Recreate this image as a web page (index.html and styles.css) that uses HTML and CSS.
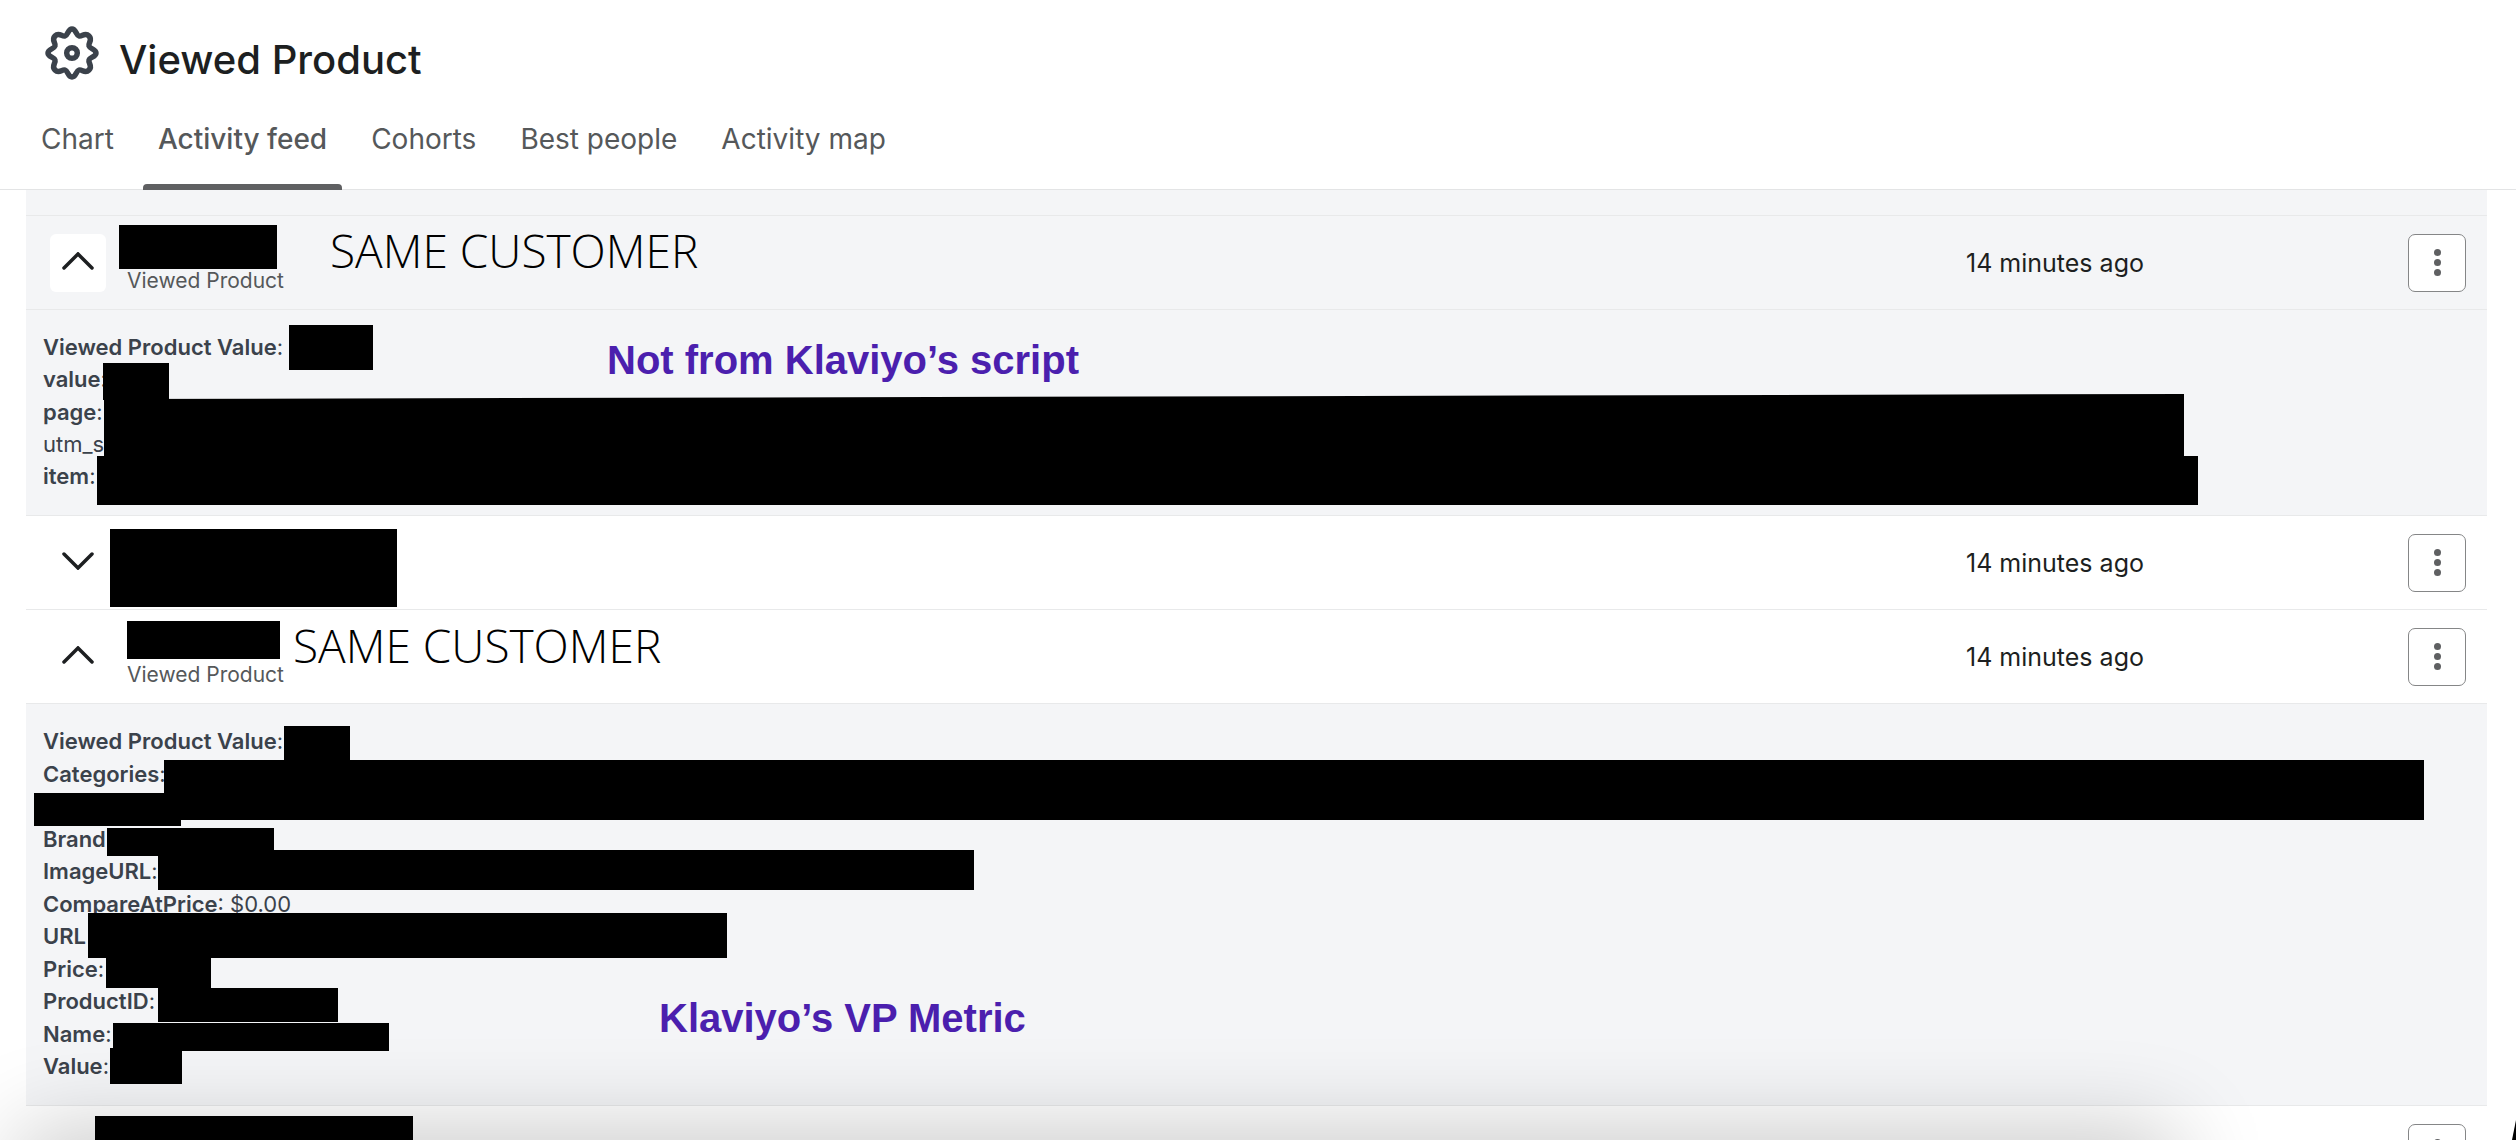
FILE: index.html
```html
<!DOCTYPE html>
<html lang="en">
<head>
  <meta charset="UTF-8" />
  <meta name="viewport" content="width=device-width, initial-scale=1.0"/>
  <title>Viewed Product</title>
  <link rel="stylesheet" href="styles.css">
</head>
<body>
  <header class="header">
    <div class="heading">
      <svg class="gear" viewBox="0 0 54 54" fill="none" stroke="#3b424b" stroke-width="5.5" stroke-linejoin="round" aria-hidden="true">
        <path d="M27 3C31 3 31 9 34 10C37 11 40 6 44 10C48 14 43 17 44 20C45 23 51 23 51 27C51 31 45 31 44 34C43 37 48 40 44 44C40 48 37 43 34 44C31 45 31 51 27 51C23 51 23 45 20 44C17 43 14 48 10 44C6 40 11 37 10 34C9 31 3 31 3 27C3 23 9 23 10 20C11 17 6 14 10 10C14 6 17 11 20 10C23 9 23 3 27 3Z"/>
        <circle cx="27" cy="27" r="5.3"/>
      </svg>
      <h1 class="title">Viewed Product</h1>
    </div>
    <nav class="tabs">
      <a class="tab" href="#">Chart</a>
      <a class="tab active" href="#">Activity feed</a>
      <a class="tab" href="#">Cohorts</a>
      <a class="tab" href="#">Best people</a>
      <a class="tab" href="#">Activity map</a>
    </nav>
  </header>

  <main class="feed">
    <div class="strip"></div>

    <section class="row shaded">
      <button class="toggle hovered" aria-label="Collapse">
        <svg class="chevron" viewBox="0 0 32 18"><path d="M2 16L16 2L30 16"/></svg>
      </button>
      <div class="person">Viewed Product</div>
      <div class="time">14 minutes ago</div>
      <button class="menu" aria-label="More"><span></span><span></span><span></span></button>
      <div class="mask m-name1"></div>
      <div class="note customer note1">SAME CUSTOMER</div>
    </section>
    <section class="details short">
      <p><b>Viewed Product Value</b>:</p>
      <p><b>value</b>:</p>
      <p><b>page</b>:</p>
      <p>utm_s</p>
      <p><b>item</b>:</p>
      <div class="mask m-total1"></div>
      <div class="mask m-value1"></div>
      <div class="mask m-page"></div>
      <div class="mask m-item"></div>
      <div class="note source note2">Not from Klaviyo’s script</div>
    </section>

    <section class="row">
      <button class="toggle" aria-label="Expand">
        <svg class="chevron" viewBox="0 0 32 18"><path d="M2 2L16 16L30 2"/></svg>
      </button>
      <div class="person"></div>
      <div class="time">14 minutes ago</div>
      <button class="menu" aria-label="More"><span></span><span></span><span></span></button>
      <div class="mask m-name2"></div>
    </section>

    <section class="row">
      <button class="toggle" aria-label="Collapse">
        <svg class="chevron" viewBox="0 0 32 18"><path d="M2 16L16 2L30 16"/></svg>
      </button>
      <div class="person">Viewed Product</div>
      <div class="time">14 minutes ago</div>
      <button class="menu" aria-label="More"><span></span><span></span><span></span></button>
      <div class="mask m-name3"></div>
      <div class="note customer note3">SAME CUSTOMER</div>
    </section>
    <section class="details long">
      <p><b>Viewed Product Value</b>:</p>
      <p><b>Categories</b>:</p>
      <p>&nbsp;</p>
      <p><b>Brand</b></p>
      <p><b>ImageURL</b>:</p>
      <p><b>CompareAtPrice</b>: $0.00</p>
      <p><b>URL</b></p>
      <p><b>Price</b>:</p>
      <p><b>ProductID</b>:</p>
      <p><b>Name</b>:</p>
      <p><b>Value</b>:</p>
      <div class="mask m-total2"></div>
      <div class="mask m-categories"></div>
      <div class="mask m-categories-end"></div>
      <div class="mask m-brand"></div>
      <div class="mask m-image"></div>
      <div class="mask m-url"></div>
      <div class="mask m-price"></div>
      <div class="mask m-product"></div>
      <div class="mask m-label"></div>
      <div class="mask m-value2"></div>
      <div class="note source note4">Klaviyo’s VP Metric</div>
    </section>

    <section class="row">
      <div class="person"></div>
      <button class="menu" aria-label="More"><span></span><span></span><span></span></button>
      <div class="mask m-name4"></div>
    </section>
  </main>
  <div class="dock-shadow"></div>
  <div class="corner"></div>
</body>
</html>
```
FILE: styles.css
```css
* {
  box-sizing: border-box;
}

body {
  display: flex;
  flex-direction: column;
  margin: 0;
  height: 100vh;
  overflow: hidden;
  background: #fff;
  color: #1d1f21;
  font-family: Inter, sans-serif;
}

.header {
  border-bottom: 1px solid #e3e4e5;
}

.heading {
  display: flex;
  align-items: flex-start;
  gap: 20px;
  padding: 26px 45px 0;
}

.gear {
  width: 54px;
  height: 54px;
}

.title {
  margin: 9px 0 0;
  font-size: 40px;
  line-height: 50px;
  font-weight: 500;
}

.tabs {
  display: flex;
  gap: 14px;
  padding: 28px 26px 0;
}

.tab {
  position: relative;
  padding: 9px 15px 34px;
  margin-bottom: -1px;
  color: #55585a;
  font-size: 28px;
  line-height: 34px;
  text-decoration: none;
}

.tab.active {
  font-weight: 500;
}

.tab.active::after {
  content: "";
  position: absolute;
  left: 0;
  right: 0;
  bottom: 0;
  height: 6px;
  background: #5f6062;
  border-radius: 4px 4px 0 0;
}

.feed {
  flex: 1;
  min-height: 0;
  margin: 0 29px 0 26px;
  overflow: hidden;
}

.strip {
  height: 26px;
  background: #f4f5f7;
  border-bottom: 1px solid #e8e9ea;
}

.row {
  position: relative;
  display: flex;
  align-items: center;
  height: 94px;
  padding: 0 21px 0 24px;
  border-bottom: 1px solid #e8e9ea;
}

.shaded {
  background: #f4f5f7;
}

.toggle {
  width: 56px;
  height: 58px;
  padding: 0;
  border: none;
  border-radius: 6px;
  background: transparent;
}

.hovered {
  background: #fff;
}

.chevron {
  width: 32px;
  height: 18px;
  fill: none;
  stroke: #1d1f21;
  stroke-width: 3.5;
  stroke-linecap: round;
}

.person {
  flex: 1;
  padding: 36px 0 0 21px;
  color: #55585a;
  font-size: 21px;
  line-height: 28px;
}

.time {
  width: 442px;
  font-size: 25px;
  line-height: 32px;
}

.menu {
  display: flex;
  flex-direction: column;
  align-items: center;
  justify-content: center;
  gap: 3px;
  width: 58px;
  height: 58px;
  padding: 0;
  border: 1px solid #858687;
  border-radius: 7px;
  background: #fff;
}

.menu span {
  width: 7px;
  height: 7px;
  border-radius: 50%;
  background: #5f6062;
}

.details {
  position: relative;
  display: flex;
  flex-direction: column;
  justify-content: space-between;
  padding: 21px 17px 23px;
  background: #f4f5f7;
  border-bottom: 1px solid #e8e9ea;
  color: #3b424b;
  font-size: 22px;
  line-height: 32px;
}

.details p {
  margin: 0;
}

.details b {
  font-weight: 600;
}

.short {
  min-height: 206px;
}

.long {
  min-height: 402px;
}

/* blacked out values */
.mask {
  position: absolute;
  background: #000;
}

.m-name1 { left: 93px; top: 9px; width: 158px; height: 44px; }
.m-name2 { left: 84px; top: 13px; width: 287px; height: 78px; }
.m-name3 { left: 101px; top: 11px; width: 153px; height: 38px; }
.m-name4 { left: 69px; top: 10px; width: 318px; height: 60px; }

.m-total1 { left: 263px; top: 15px; width: 84px; height: 45px; }
.m-value1 { left: 77px; top: 53px; width: 66px; height: 37px; }
.m-page { left: 78px; right: 303px; top: 84px; height: 62px; clip-path: polygon(0 5px, 100% 0, 100% 100%, 0 100%); }
.m-item { left: 71px; right: 289px; top: 146px; height: 49px; }

.m-total2 { left: 258px; top: 22px; width: 66px; height: 34px; }
.m-categories { left: 138px; right: 63px; top: 56px; height: 60px; }
.m-categories-end { left: 8px; top: 89px; width: 147px; height: 33px; }
.m-brand { left: 81px; top: 124px; width: 167px; height: 28px; }
.m-image { left: 132px; top: 146px; width: 816px; height: 40px; }
.m-url { left: 62px; top: 209px; width: 639px; height: 45px; }
.m-price { left: 80px; top: 254px; width: 105px; height: 30px; }
.m-product { left: 132px; top: 284px; width: 180px; height: 34px; }
.m-label { left: 87px; top: 319px; width: 276px; height: 28px; }
.m-value2 { left: 84px; top: 344px; width: 72px; height: 36px; }

/* annotations */
.note {
  position: absolute;
  white-space: nowrap;
}

.customer {
  color: #000;
  font-family: "Open Sans", sans-serif;
  font-size: 46px;
  font-weight: 300;
  line-height: 60px;
}

.source {
  color: #4b1fae;
  font-family: "Liberation Sans", Arial, sans-serif;
  font-size: 40px;
  font-weight: 700;
  line-height: 46px;
}

.note1 { left: 304px; top: 4px; }
.note2 { left: 581px; top: 27px; }
.note3 { left: 267px; top: 5px; }
.note4 { left: 633px; top: 291px; }

/* shadow of the panel just under the window */
.dock-shadow {
  position: fixed;
  left: 30px;
  right: 350px;
  top: 100%;
  height: 80px;
  box-shadow: 0 0 90px 10px rgba(0, 0, 0, 0.22);
}

.corner {
  position: fixed;
  right: 0;
  bottom: 0;
  width: 4px;
  height: 20px;
  background: #000;
  clip-path: polygon(100% 0, 100% 100%, 0 100%);
}
```
